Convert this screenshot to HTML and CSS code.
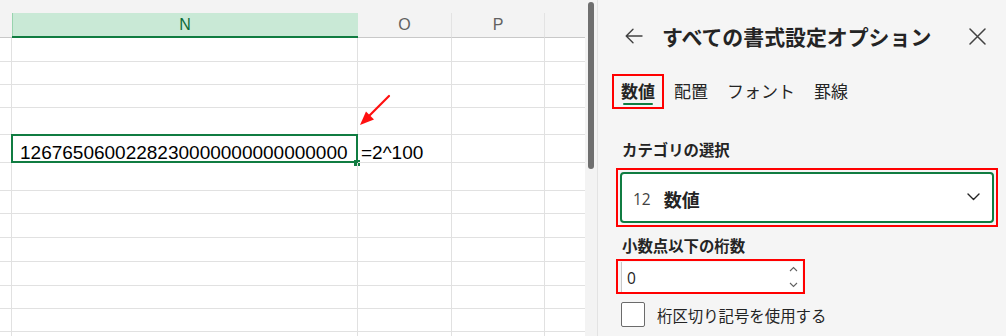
FILE: index.html
```html
<!DOCTYPE html>
<html lang="ja">
<head>
<meta charset="utf-8">
<title>書式設定</title>
<link rel="stylesheet" href="styles.css">
</head>
<body>
<div class="app">
  <div class="sheet">
    <div class="topband"></div>
    <div class="hdr">
      <div class="hc rh"></div>
      <div class="hc cn active">N</div>
      <div class="hc co">O</div>
      <div class="hc cp">P</div>
      <div class="hc cq"></div>
    </div>
    <div class="row r24"><div class="c rh"></div><div class="c cn"></div><div class="c co"></div><div class="c cp"></div><div class="c cq"></div></div>
    <div class="row r23"><div class="c rh"></div><div class="c cn"></div><div class="c co"></div><div class="c cp"></div><div class="c cq"></div></div>
    <div class="row r23"><div class="c rh"></div><div class="c cn"></div><div class="c co"></div><div class="c cp"></div><div class="c cq"></div></div>
    <div class="row r27"><div class="c rh"></div><div class="c cn"></div><div class="c co"></div><div class="c cp"></div><div class="c cq"></div></div>
    <div class="row r28"><div class="c rh"></div><div class="c cn selected"><span class="val">1267650600228230000000000000000</span><span class="handle"></span></div><div class="c co"><span class="val formula">=2^100</span></div><div class="c cp"></div><div class="c cq"></div></div>
    <div class="row r28"><div class="c rh"></div><div class="c cn"></div><div class="c co"></div><div class="c cp"></div><div class="c cq"></div></div>
    <div class="row r23"><div class="c rh"></div><div class="c cn"></div><div class="c co"></div><div class="c cp"></div><div class="c cq"></div></div>
    <div class="row r24"><div class="c rh"></div><div class="c cn"></div><div class="c co"></div><div class="c cp"></div><div class="c cq"></div></div>
    <div class="row r24"><div class="c rh"></div><div class="c cn"></div><div class="c co"></div><div class="c cp"></div><div class="c cq"></div></div>
    <div class="row r24"><div class="c rh"></div><div class="c cn"></div><div class="c co"></div><div class="c cp"></div><div class="c cq"></div></div>
    <div class="row r23"><div class="c rh"></div><div class="c cn"></div><div class="c co"></div><div class="c cp"></div><div class="c cq"></div></div>
    <div class="row r23"><div class="c rh"></div><div class="c cn"></div><div class="c co"></div><div class="c cp"></div><div class="c cq"></div></div>
    <div class="row r24"><div class="c rh"></div><div class="c cn"></div><div class="c co"></div><div class="c cp"></div><div class="c cq"></div></div>
    <svg class="arrow" width="585" height="336" viewBox="0 0 585 336">
      <line x1="389" y1="96" x2="369" y2="116" stroke="#ff1010" stroke-width="2.2" stroke-linecap="round"/>
      <polygon points="360,125 374,119.5 366,111.5" fill="#ff1010"/>
    </svg>
  </div>
  <div class="vscroll"><div class="thumb"></div></div>
  <aside class="panel">
    <div class="phead">
      <svg class="back" width="18" height="16" viewBox="0 0 18 16">
        <path d="M17 8H1.5M8 1.2L1.2 8L8 14.8" fill="none" stroke="#424242" stroke-width="1.4" stroke-linecap="round" stroke-linejoin="round"/>
      </svg>
      <h1 class="ptitle">すべての書式設定オプション</h1>
      <svg class="close" width="17" height="17" viewBox="0 0 17 17">
        <path d="M1 1L16 16M16 1L1 16" fill="none" stroke="#424242" stroke-width="1.5" stroke-linecap="round"/>
      </svg>
    </div>
    <div class="tabs">
      <div class="tab on mark"><span class="tlabel">数値</span><span class="uline"></span></div>
      <div class="tab"><span class="tlabel">配置</span><span class="uline"></span></div>
      <div class="tab"><span class="tlabel">フォント</span><span class="uline"></span></div>
      <div class="tab"><span class="tlabel">罫線</span><span class="uline"></span></div>
    </div>
    <div class="flabel first">カテゴリの選択</div>
    <div class="mark selwrap">
      <div class="select">
        <span class="icon12">12</span>
        <span class="selval">数値</span>
        <svg class="chev" width="13" height="8" viewBox="0 0 13 8">
          <path d="M1 1L6.5 6.5L12 1" fill="none" stroke="#242424" stroke-width="1.4" stroke-linecap="round" stroke-linejoin="round"/>
        </svg>
      </div>
    </div>
    <div class="flabel">小数点以下の桁数</div>
    <div class="mark spinwrap">
      <div class="spin">
        <span class="spinval">0</span>
        <div class="spinbtns">
          <svg width="9" height="6" viewBox="0 0 9 6"><path d="M1 5L4.5 1.5L8 5" fill="none" stroke="#616161" stroke-width="1.1"/></svg>
          <svg width="9" height="6" viewBox="0 0 9 6"><path d="M1 1L4.5 4.5L8 1" fill="none" stroke="#616161" stroke-width="1.1"/></svg>
        </div>
      </div>
    </div>
    <label class="check">
      <span class="box"></span>
      <span class="clabel">桁区切り記号を使用する</span>
    </label>
  </aside>
</div>
</body>
</html>
```
FILE: styles.css
```css
html, body {
  margin: 0;
  padding: 0;
  width: 1006px;
  height: 336px;
  overflow: hidden;
  background: #ffffff;
}

.app {
  display: flex;
  width: 1006px;
  height: 336px;
  overflow: hidden;
}

/* ---------- sheet ---------- */
.sheet {
  position: relative;
  width: 585px;
  flex: none;
  background: #ffffff;
  font-family: "Liberation Sans", Arial, sans-serif;
}

.topband {
  height: 13px;
  background: #f3f3f3;
}

.hdr {
  display: flex;
  height: 25px;
  background: #f3f3f3;
}

.hc {
  box-sizing: border-box;
  height: 25px;
  border-bottom: 1px solid #c8c8c8;
  border-right: 1px solid #e3e3e3;
  font-size: 16px;
  line-height: 24px;
  text-align: center;
  color: #616161;
}

.hc.rh { border-right: none; }
.hc.cq { border-right: none; }

.hc.active {
  background: #c9e9d6;
  color: #0e6b39;
  border-bottom: 2px solid #107c41;
  border-right: none;
  box-shadow: inset 1px 0 0 #98d3ae;
}

.rh { width: 12px; }
.cn { width: 346px; }
.co { width: 94px; }
.cp { width: 93px; }
.cq { width: 40px; }

.row {
  display: flex;
}
.r23 { height: 23px; }
.r24 { height: 24px; }
.r27 { height: 27px; }
.r28 { height: 28px; }

.c {
  position: relative;
  box-sizing: border-box;
  flex: none;
  height: 100%;
  border-right: 1px solid #e1e1e1;
  border-bottom: 1px solid #e1e1e1;
}
.c.cq { border-right: none; }

.val {
  display: block;
  white-space: nowrap;
  font-size: 19px;
  line-height: 24px;
  padding-top: 6px;
  padding-left: 8px;
  color: #000000;
}

.val.formula {
  padding-left: 3px;
}

.selected::before {
  content: "";
  position: absolute;
  left: -1px;
  top: -1px;
  right: -1px;
  bottom: -1px;
  border: 2px solid #107c41;
  pointer-events: none;
}

.handle {
  position: absolute;
  right: -3px;
  bottom: -4px;
  width: 6px;
  height: 6px;
  background: #107c41;
}

.arrow {
  position: absolute;
  left: 0;
  top: 0;
  pointer-events: none;
}

/* ---------- scrollbar ---------- */
.vscroll {
  width: 12px;
  flex: none;
  background: #f3f3f3;
  padding-top: 2px;
  box-sizing: border-box;
}

.thumb {
  width: 6px;
  height: 167px;
  margin-left: 3px;
  background: #6f6f6f;
  border-radius: 3px;
}

/* ---------- panel ---------- */
.panel {
  flex: 1;
  box-sizing: border-box;
  background: #f5f5f5;
  border-left: 1px solid #e3e3e3;
  padding: 16px 8px 0 24px;
  font-family: "Noto Sans CJK JP", "Noto Sans", sans-serif;
  color: #242424;
}

.phead {
  display: flex;
  align-items: center;
  height: 40px;
}

.back {
  margin-left: 3px;
  flex: none;
}

.ptitle {
  margin: 0 0 0 19px;
  font-size: 20.9px;
  font-weight: 700;
  line-height: 28px;
  color: #242424;
  white-space: nowrap;
}

.close {
  margin-left: auto;
  margin-right: 12px;
  flex: none;
}

.tabs {
  display: flex;
  gap: 1px;
  margin-top: 18px;
  margin-left: -10px;
}

.tab {
  display: flex;
  flex-direction: column;
  border: 2px solid transparent;
  padding: 3px 7px 2px 7px;
}

.tlabel {
  font-size: 17px;
  line-height: 24px;
  color: #242424;
  white-space: nowrap;
}

.tab.on .tlabel {
  font-weight: 700;
}

.uline {
  height: 2px;
  margin: 0 2px;
  border-radius: 1px;
}

.tab.on .uline {
  background: #107c41;
}

.mark.tab,
.mark {
  border: 2px solid #ff0000;
}

.flabel {
  font-size: 15.4px;
  font-weight: 700;
  line-height: 20px;
  margin-top: 8px;
  white-space: nowrap;
}

.flabel.first {
  margin-top: 30px;
}

.selwrap {
  margin-top: 9px;
  margin-left: -6px;
  padding: 2px;
}

.select {
  box-sizing: border-box;
  height: 51px;
  display: flex;
  align-items: center;
  background: #ffffff;
  border: 2px solid #107c41;
  border-radius: 4px;
  padding: 3px 12px 0 11px;
}

.icon12 {
  font-family: "Open Sans", "Noto Sans", sans-serif;
  font-size: 15.5px;
  color: #424242;
  line-height: 20px;
}

.selval {
  margin-left: 13px;
  font-size: 18px;
  font-weight: 700;
  line-height: 24px;
}

.chev {
  margin-left: auto;
  margin-top: -4px;
}

.spinwrap {
  box-sizing: border-box;
  width: 189px;
  margin-top: 4px;
  margin-left: -6px;
  padding: 1px 1px 0 3px;
}

.spin {
  box-sizing: border-box;
  height: 30px;
  display: flex;
  align-items: center;
  background: #ffffff;
  border-left: 1px solid #c8c8c8;
  padding: 0 4px 0 5px;
}

.spinval {
  font-family: "Open Sans", "Noto Sans", sans-serif;
  font-size: 15.5px;
  line-height: 20px;
  color: #242424;
  padding-top: 2px;
}

.spinbtns {
  margin-left: auto;
  display: flex;
  flex-direction: column;
  gap: 10px;
}

.spinbtns svg {
  display: block;
}

.check {
  display: flex;
  align-items: center;
  margin-top: 8px;
  margin-left: -1px;
}

.box {
  box-sizing: border-box;
  width: 24px;
  height: 25px;
  background: #ffffff;
  border: 1px solid #6b6b6b;
  border-radius: 2px;
  flex: none;
}

.clabel {
  margin-left: 12px;
  font-size: 15.4px;
  line-height: 20px;
  color: #242424;
  white-space: nowrap;
}
```
